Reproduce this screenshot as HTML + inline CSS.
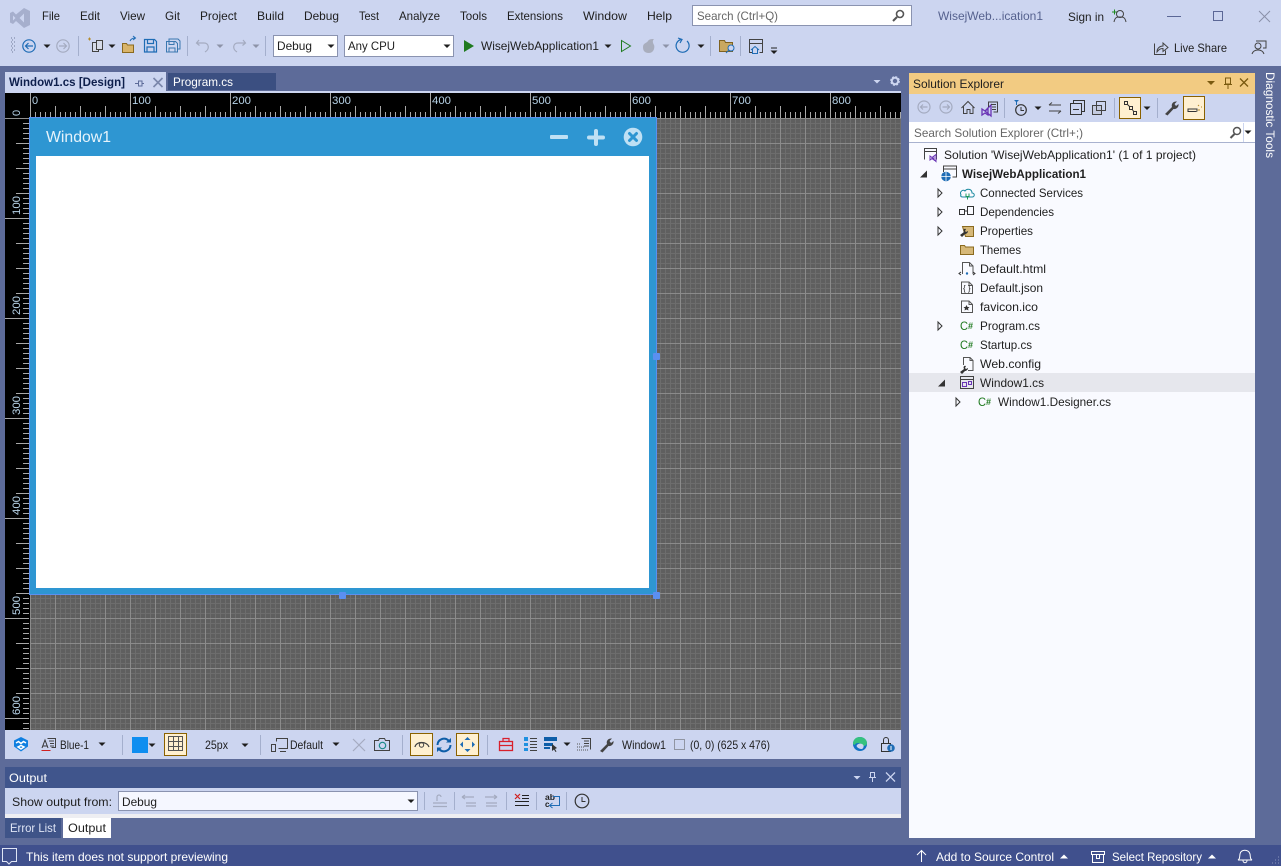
<!DOCTYPE html>
<html lang="en">
<head>
<meta charset="utf-8">
<title>Visual Studio</title>
<style>
html,body{margin:0;padding:0;background:#5d6b99;overflow:hidden}
svg{display:block}
text{font-family:"Liberation Sans",sans-serif;font-size:12px;fill:#1e1e1e}
.l{fill:#fff}
.g{fill:#666}
.r{fill:#b7d3e8;font-size:11px}
.c{shape-rendering:crispEdges}
.s{fill:none;stroke:#424242;stroke-width:1}
.b{fill:none;stroke:#1e6cb5;stroke-width:1.2}
.d{fill:none;stroke:#a4abc0;stroke-width:1.2}
</style>
</head>
<body>
<svg xmlns="http://www.w3.org/2000/svg" width="1281" height="866" viewBox="0 0 1281 866">
<defs>
<path id="cr" d="M-3.5-1.5h7L0 2z" fill="#1e1e1e"/>
<path id="crg" d="M-3.5-1.5h7L0 2z" fill="#8d93a8"/>
<pattern id="grid" patternUnits="userSpaceOnUse" x="30" y="118" width="25" height="25">
<rect width="25" height="25" fill="#5f5f5f"/>
<path d="M0 .5H25M0 5.5H25M0 10.5H25M0 15.5H25M0 20.5H25M.5 0V25M5.5 0V25M10.5 0V25M15.5 0V25M20.5 0V25" stroke="#6d6d6d" stroke-width="1"/>
<path d="M0 .5H25M.5 0V25" stroke="#8b8b8b" stroke-width="1"/>
</pattern>
<pattern id="hs" patternUnits="userSpaceOnUse" x="30" y="93" width="5" height="25"><rect x="0" y="19" width="1" height="6" fill="#a8a8a8"/></pattern>
<pattern id="hm" patternUnits="userSpaceOnUse" x="30" y="93" width="25" height="25"><rect x="0" y="13" width="1" height="12" fill="#a8a8a8"/></pattern>
<pattern id="hb" patternUnits="userSpaceOnUse" x="30" y="93" width="100" height="25"><rect x="0" y="0" width="1" height="25" fill="#a8a8a8"/></pattern>
<pattern id="vs" patternUnits="userSpaceOnUse" x="5" y="118" width="25" height="5"><rect x="18" y="0" width="6" height="1" fill="#a8a8a8"/></pattern>
<pattern id="vm" patternUnits="userSpaceOnUse" x="5" y="118" width="25" height="25"><rect x="11" y="0" width="13" height="1" fill="#a8a8a8"/></pattern>
<pattern id="vb" patternUnits="userSpaceOnUse" x="5" y="118" width="25" height="100"><rect x="0" y="0" width="24" height="1" fill="#a8a8a8"/></pattern>
</defs>

<rect width="1281" height="866" fill="#5d6b99"/>
<!-- top chrome -->
<rect class="c" width="1281" height="66" fill="#ccd5f0"/>
<path d="M24 8l6 3v14l-6 3-8-7-3 3-3-1.500V13l3-1.500 3 3zM24 13.500l-4.500 4.500 4.500 4.500zM13 15.500v5l2.500-2.500z" fill="#a6afcd" fill-rule="evenodd"/>
<text x="42" y="20" textLength="18" lengthAdjust="spacingAndGlyphs">File</text>
<text x="80" y="20" textLength="20" lengthAdjust="spacingAndGlyphs">Edit</text>
<text x="120" y="20" textLength="25" lengthAdjust="spacingAndGlyphs">View</text>
<text x="165" y="20" textLength="15" lengthAdjust="spacingAndGlyphs">Git</text>
<text x="200" y="20" textLength="37" lengthAdjust="spacingAndGlyphs">Project</text>
<text x="257" y="20" textLength="27" lengthAdjust="spacingAndGlyphs">Build</text>
<text x="304" y="20" textLength="35" lengthAdjust="spacingAndGlyphs">Debug</text>
<text x="359" y="20" textLength="20" lengthAdjust="spacingAndGlyphs">Test</text>
<text x="399" y="20" textLength="41" lengthAdjust="spacingAndGlyphs">Analyze</text>
<text x="460" y="20" textLength="27" lengthAdjust="spacingAndGlyphs">Tools</text>
<text x="507" y="20" textLength="56" lengthAdjust="spacingAndGlyphs">Extensions</text>
<text x="583" y="20" textLength="44" lengthAdjust="spacingAndGlyphs">Window</text>
<text x="647" y="20" textLength="25" lengthAdjust="spacingAndGlyphs">Help</text>
<rect class="c" x="692.500" y="5.500" width="219" height="20" fill="#fff" stroke="#8a93b0"/>
<text class="g" x="697" y="20" textLength="81" lengthAdjust="spacingAndGlyphs">Search (Ctrl+Q)</text>
<circle cx="900" cy="14" r="3.500" fill="none" stroke="#555" stroke-width="1.600"/><path d="M897 17l-4 4" stroke="#555" stroke-width="2"/>
<text x="938" y="20" textLength="105" lengthAdjust="spacingAndGlyphs" style="fill:#56628f">WisejWeb...ication1</text>
<text x="1068" y="21" textLength="36" lengthAdjust="spacingAndGlyphs">Sign in</text>
<path d="M1112 12h5M1114.500 9.500v5" stroke="#1f8a1f"/>
<circle cx="1120" cy="14" r="3.500" class="s"/><path d="M1114 22c1-5 3-5 6-5s5 0 6 5" class="s"/>
<path class="c" d="M1167 16.500h14" stroke="#5b6796"/>
<rect class="c" x="1213.500" y="11.500" width="9" height="9" fill="none" stroke="#5b6796"/>
<path d="M1259 11l11 11M1270 11l-11 11" stroke="#8a90a8"/>

<!-- main toolbar -->
<path d="M11 38h1M14 38h1M12 40h1M11 42h1M14 42h1M12 44h1M11 46h1M14 46h1M12 48h1M11 50h1M14 50h1M12 52h1" stroke="#707a9a" stroke-dasharray="1 1"/>
<circle cx="29" cy="46" r="6.200" class="b"/><path d="M33 46h-7M28.500 43l-3 3 3 3" class="b"/>
<use href="#cr" x="47" y="46"/>
<circle cx="63" cy="46" r="6.200" class="d"/><path d="M59 46h7M63.500 43l3 3-3 3" class="d"/>
<path class="c" d="M78.500 36v20M187.500 36v20M265.500 36v20M710.500 36v20M740.500 36v20" stroke="#a4afcd"/>
<path d="M88 39h3M89.500 37.500v3" stroke="#b58a2a"/>
<rect x="92.500" y="42.500" width="6" height="9" fill="#d6dbe9" stroke="#424242"/>
<rect x="96.500" y="40.500" width="6" height="9" fill="#d6dbe9" stroke="#424242"/>
<use href="#cr" x="112" y="46"/>
<path d="M122.500 52.500v-9h4l1 1.500h6v7.500z" fill="#d9b46a" stroke="#8a6a1f"/><path d="M130 41c1-2 3-3 5-3M133 36l2.500 2-2.500 2" fill="none" stroke="#1e6cb5"/>
<path d="M144.500 39.500h10l2 2v10.500h-12z M147.500 39.500v4h6v-4M147 52v-5h7v5" class="b"/>
<path d="M166.500 41.500h9l2 2v8.500h-11z M169 41.500v3h5v-3M169 52v-4h6v4M169 41v-2h9l2 2v8h-2" fill="none" stroke="#3a78b0"/>
<path d="M199 40l-2.500 3 3 2.500M197 43h7c5 0 6 6 1 9" class="d"/>
<use href="#crg" x="220" y="46"/>
<path d="M243 40l2.500 3-3 2.500M245 43h-7c-5 0-6 6-1 9" class="d"/>
<use href="#crg" x="256" y="46"/>
<rect class="c" x="273.500" y="35.500" width="64" height="21" fill="#fff" stroke="#8a93b0"/>
<text x="277" y="50" textLength="35" lengthAdjust="spacingAndGlyphs">Debug</text>
<use href="#cr" x="331" y="46"/>
<rect class="c" x="344.500" y="35.500" width="109" height="21" fill="#fff" stroke="#8a93b0"/>
<text x="348" y="50" textLength="47" lengthAdjust="spacingAndGlyphs">Any CPU</text>
<use href="#cr" x="447" y="46"/>
<path d="M464 40l10 6-10 6z" fill="#1f7a1f"/>
<text x="481" y="50" textLength="118" lengthAdjust="spacingAndGlyphs">WisejWebApplication1</text>
<use href="#cr" x="608" y="46"/>
<path d="M621.500 40.500l9 5.500-9 5.500z" fill="none" stroke="#1f7a1f"/>
<path d="M643 47c0-4 4-4 5-6s4-2 6-2c-2 2-1 4 0 6s0 8-5 8-6-3-6-6z" fill="#a9aebd"/>
<use href="#crg" x="666" y="46"/>
<path d="M681 39.500a6.500 6.500 0 1 0 6 1.500M678 38l4 1.500-2 3.500" fill="none" stroke="#1e6cb5" stroke-width="1.200"/>
<use href="#cr" x="701" y="46"/>
<path d="M719.500 51.500v-11h5l1 2h7v9z" fill="#c9a860" stroke="#7f6220"/><circle cx="731" cy="48" r="3" fill="#ccd5f0" stroke="#1e6cb5"/><path d="M729 50l-3 3" stroke="#1e6cb5"/>
<path d="M753 52.500h-3.500v-13h13v13h-3M749.500 43.500h13" class="s"/><path d="M751 50l4-3.500 4 3.500M752.500 49v4.500h5V49" fill="none" stroke="#1e6cb5"/>
<path d="M771 48h6" stroke="#222"/><use href="#cr" x="774" y="52"/>
<path d="M1154.500 43.500v11h11v-4" class="s"/><path d="M1157 52c0-4 3-6 6-6v-3l5 4.500-5 4v-3c-3 0-4 1-6 3.500z" class="s"/>
<text x="1174" y="52" textLength="53" lengthAdjust="spacingAndGlyphs">Live Share</text>
<circle cx="1258" cy="46" r="3" class="s"/><path d="M1252 54c1-3 3-4 6-4s5 1 6 4M1256 41h10v7h-3" class="s"/>

<!-- document tabs -->
<rect class="c" x="5" y="72" width="161" height="21" fill="#ccd5f0"/>
<text x="9" y="86" textLength="116" lengthAdjust="spacingAndGlyphs" style="font-weight:bold;fill:#0e1f4c">Window1.cs [Design]</text>
<path d="M135 83.500h3M138.500 81v5h3.500v-5zM142 83.500h2" stroke="#5d6b99" fill="none"/>
<path d="M153.500 78l9 9M162.500 78l-9 9" stroke="#7a86ab" stroke-width="1.600"/>
<rect class="c" x="168" y="73" width="108" height="17" fill="#3b4f81"/>
<text class="l" x="173" y="86" textLength="60" lengthAdjust="spacingAndGlyphs">Program.cs</text>
<path d="M873.500 80h7l-3.500 3.500z" fill="#ccd5f0"/>
<circle cx="895" cy="81" r="3.200" fill="none" stroke="#ccd5f0" stroke-width="2"/><circle cx="895" cy="81" r="4.300" fill="none" stroke="#ccd5f0" stroke-width="1.200" stroke-dasharray="2 1.400"/>

<!-- designer -->
<rect class="c" x="5" y="91" width="896" height="2" fill="#ccd5f0"/>
<rect class="c" x="5" y="93" width="896" height="25" fill="#000"/>
<rect class="c" x="5" y="118" width="25" height="612" fill="#000"/>
<rect class="c" x="30" y="118" width="871" height="612" fill="url(#grid)"/>
<g class="c">
<rect x="30" y="93" width="871" height="25" fill="url(#hs)"/>
<rect x="30" y="93" width="871" height="25" fill="url(#hm)"/>
<rect x="30" y="93" width="871" height="25" fill="url(#hb)"/>
<rect x="5" y="118" width="25" height="612" fill="url(#vs)"/>
<rect x="5" y="118" width="25" height="612" fill="url(#vm)"/>
<rect x="5" y="118" width="25" height="612" fill="url(#vb)"/>
<rect x="5" y="118" width="25" height="1" fill="#8f8f8f"/>
</g>
<text class="r" x="32" y="104">0</text>
<text class="r" x="132" y="104" textLength="19" lengthAdjust="spacingAndGlyphs">100</text>
<text class="r" x="232" y="104" textLength="19" lengthAdjust="spacingAndGlyphs">200</text>
<text class="r" x="332" y="104" textLength="19" lengthAdjust="spacingAndGlyphs">300</text>
<text class="r" x="432" y="104" textLength="19" lengthAdjust="spacingAndGlyphs">400</text>
<text class="r" x="532" y="104" textLength="19" lengthAdjust="spacingAndGlyphs">500</text>
<text class="r" x="632" y="104" textLength="19" lengthAdjust="spacingAndGlyphs">600</text>
<text class="r" x="732" y="104" textLength="19" lengthAdjust="spacingAndGlyphs">700</text>
<text class="r" x="832" y="104" textLength="19" lengthAdjust="spacingAndGlyphs">800</text>
<text class="r" transform="translate(20,116) rotate(-90)">0</text>
<text class="r" transform="translate(20,215) rotate(-90)" textLength="19" lengthAdjust="spacingAndGlyphs">100</text>
<text class="r" transform="translate(20,315) rotate(-90)" textLength="19" lengthAdjust="spacingAndGlyphs">200</text>
<text class="r" transform="translate(20,415) rotate(-90)" textLength="19" lengthAdjust="spacingAndGlyphs">300</text>
<text class="r" transform="translate(20,515) rotate(-90)" textLength="19" lengthAdjust="spacingAndGlyphs">400</text>
<text class="r" transform="translate(20,615) rotate(-90)" textLength="19" lengthAdjust="spacingAndGlyphs">500</text>
<text class="r" transform="translate(20,715) rotate(-90)" textLength="19" lengthAdjust="spacingAndGlyphs">600</text>

<!-- window -->
<rect class="c" x="29.500" y="117.500" width="627" height="477" fill="#2e96d2" stroke="#5b8ff0"/>
<rect class="c" x="36" y="156" width="613" height="432" fill="#fff"/>
<text x="46" y="142" textLength="65" lengthAdjust="spacingAndGlyphs" style="font-size:16px;fill:#e6f3fb">Window1</text>
<rect x="550" y="135" width="18" height="4" rx="1" fill="#bfe0f4"/>
<path d="M589 137.500h14M596 131v13" stroke="#bfe0f4" stroke-width="4" stroke-linecap="round"/>
<circle cx="633" cy="137" r="9.300" fill="#bfe0f4"/>
<path d="M629.500 133.500l7 7M636.500 133.500l-7 7" stroke="#2e96d2" stroke-width="3" stroke-linecap="round"/>
<rect x="339" y="592" width="7" height="7" rx="1" fill="#5b8ff0"/>
<rect x="653" y="353" width="7" height="7" rx="1" fill="#5b8ff0"/>
<rect x="653" y="592" width="7" height="7" rx="1" fill="#5b8ff0"/>

<!-- designer toolbar -->
<rect class="c" x="5" y="730" width="896" height="29" fill="#ccd5f0"/>
<path d="M21 737l7 3.500v6l-7 5-7-5v-6z" fill="#0f7fe0"/><path d="M16 743l2.500-1.500 2.500 2 2.500-2L26 743M21 749l-3-2 3-1.500 3 1.500z" stroke="#fff" stroke-width="1.500" fill="none"/>
<path d="M42 748l3-8 3 8M43 746h4" fill="none" stroke="#333"/><path d="M41.500 750.500h9" stroke="#d02020"/>
<path d="M47.500 738.500h8v9h-4M49 741h5M50 743.500h4M50 746h4" class="s"/>
<text x="60" y="749" textLength="29" lengthAdjust="spacingAndGlyphs">Blue-1</text>
<use href="#cr" x="102" y="744"/>
<path class="c" d="M122.500 735v20M260.500 735v20M402.500 735v20M487.500 735v20" stroke="#a4afcd"/>
<rect class="c" x="132" y="737" width="16" height="16" fill="#0f8ef0"/>
<use href="#cr" x="152" y="745"/>
<rect class="c" x="164.500" y="733.500" width="22" height="22" fill="#fff0d0" stroke="#8a6100"/>
<path class="c" d="M168.500 736.500h14v14h-14zM173.500 736.500v14M178.500 736.500v14M168.500 741.500h14M168.500 746.500h14" fill="none" stroke="#555"/>
<text x="205" y="749" textLength="23" lengthAdjust="spacingAndGlyphs">25px</text>
<use href="#cr" x="245" y="745"/>
<path d="M276.500 741.500v-3h11v10h-9M280 751.500h6" class="s"/><rect x="271.500" y="744.500" width="4" height="7" fill="none" stroke="#424242"/>
<text x="290" y="749" textLength="33" lengthAdjust="spacingAndGlyphs">Default</text>
<use href="#cr" x="336" y="744"/>
<path d="M353 739l12 12M365 739l-12 12" stroke="#a4abc0" stroke-width="1.200"/>
<path d="M374.500 740.500h4l1-2h5l1 2h4v10h-15z" fill="none" stroke="#424242"/><circle cx="382.500" cy="745.500" r="3.200" fill="none" stroke="#1b8a8a" stroke-width="1.200"/>
<rect class="c" x="410.500" y="733.500" width="22" height="22" fill="#fff0d0" stroke="#8a6100"/>
<path d="M415 747c1-6 12-6 14 0" fill="none" stroke="#424242" stroke-width="1.200"/><circle cx="421.500" cy="745" r="2.200" fill="none" stroke="#424242"/>
<path d="M437.500 745a6.500 6.500 0 0 1 11-4.500M450.500 745a6.500 6.500 0 0 1-11 4.500" fill="none" stroke="#0e5ea8" stroke-width="2"/><path d="M446 742.500h5v-4.500zM442 747.500h-5v4.500z" fill="#0e5ea8"/>
<rect class="c" x="456.500" y="733.500" width="22" height="22" fill="#fff0d0" stroke="#8a6100"/>
<path d="M467.500 737l3 3h-6zM467.500 752l3-3h-6zM460 744.500l3-3v6zM475 744.500l-3-3v6z" fill="#1e6cb5"/>
<rect x="499.500" y="741.500" width="13" height="9" fill="none" stroke="#d8202c" stroke-width="1.300"/><path d="M503 741v-2.500h6v2.500M499.500 745.500h13" fill="none" stroke="#d8202c" stroke-width="1.200"/>
<path class="c" d="M524 737h4v4h-4zM524 743h4v3h-4zM524 748h4v3h-4z" fill="#1e90e0"/>
<path class="c" d="M530 738.500h7M530 741.500h7M530 744.500h7M530 747.500h7M530 750.500h7" stroke="#424242"/>
<rect class="c" x="544" y="737" width="13" height="4" fill="#0e5ea8"/><rect class="c" x="544" y="743" width="9" height="3" fill="#0e5ea8"/><path class="c" d="M544 748h6" stroke="#0e5ea8" stroke-width="2"/><path d="M552 744l5 4-2 1 1.500 2.500-1 .5-1.500-2.500-2 1.500z" fill="#333"/>
<use href="#cr" x="567" y="744"/>
<path d="M581.500 738.500h9v11M584 741h5M584 743.500h5M584 746h5" class="s"/><path d="M577 744h4M577 747h7M577 750h11" stroke="#555" stroke-dasharray="1 1"/>
<path d="M600 751l7-7c-1-3 1-6 5-5.500l-2.500 2.500 1.500 2 2.500-2c.5 3-2 5.500-5 5l-6 6.500z" fill="#444"/>
<text x="622" y="749" textLength="44" lengthAdjust="spacingAndGlyphs">Window1</text>
<rect class="c" x="674.500" y="739.500" width="10" height="10" fill="none" stroke="#555" stroke-dasharray="1 1"/>
<text x="690" y="749" textLength="80" lengthAdjust="spacingAndGlyphs">(0, 0) (625 x 476)</text>
<circle cx="860" cy="744" r="7" fill="#1272c4"/><path d="M853 744c0-5 3.500-7 7-7 4 0 7 3 7 6 0 2-2 3-3.500 3-1 0-2-.5-2.500-1.500-1-2-5-2-6 0-.5 1-2-.5-2-.5z" fill="#35c27f"/><path d="M856.500 746c1-3 6-3 7-.5.5 1.500-.5 3-1.500 3.500-2.500 0-4.500-1-5.500-3z" fill="#ccd5f0"/>
<rect x="881.500" y="743.500" width="9" height="8" fill="none" stroke="#333"/><path d="M883.500 743v-3a2.500 2.500 0 0 1 5 0v3" fill="none" stroke="#333"/>
<circle cx="891" cy="748" r="3.800" fill="#1e6cb5"/><path d="M891 746v4" stroke="#fff"/>

<!-- output -->
<rect class="c" x="5" y="767" width="896" height="21" fill="#40558c"/>
<text class="l" x="9" y="782" textLength="38" lengthAdjust="spacingAndGlyphs">Output</text>
<path d="M853.500 776h7l-3.500 3.500z" fill="#ccd5f0"/>
<path d="M870.500 772.500h4v5h-4zM869 777.500h7M872.500 778v4" fill="none" stroke="#ccd5f0"/>
<path d="M886 772.500l9 9M895 772.500l-9 9" stroke="#ccd5f0" stroke-width="1.300"/>
<rect class="c" x="5" y="788" width="896" height="26" fill="#ccd5f0"/>
<rect class="c" x="5" y="814" width="896" height="4" fill="#eeeef2"/>
<text x="12" y="806" textLength="100" lengthAdjust="spacingAndGlyphs">Show output from:</text>
<rect class="c" x="118.500" y="791.500" width="299" height="19" fill="#f5f7ff" stroke="#8a93b0"/>
<text x="122" y="806" textLength="35" lengthAdjust="spacingAndGlyphs">Debug</text>
<use href="#cr" x="411" y="801"/>
<path class="c" d="M424.500 792v18M454.500 792v18M506.500 792v18M536.500 792v18M566.500 792v18" stroke="#a4afcd"/>
<path d="M433 803h14M433 806.500h14M437 801v-4a2 2 0 0 1 4 0" class="d"/>
<path d="M462 797h12M462 797l3-2M462 797l3 2M466 803h10M466 806h10" class="d"/>
<path d="M497 797h-12M497 797l-3-2M497 797l-3 2M486 803h11M486 806h11" class="d"/>
<path d="M515 794l5 5M520 794l-5 5" stroke="#d02020" stroke-width="1.200"/>
<path class="c" d="M522 795.500h7M522 798.500h7M515 801.500h14M515 805.500h14" stroke="#222"/>
<text x="545" y="800" style="font-size:8px;font-weight:bold" textLength="10" lengthAdjust="spacingAndGlyphs">ab</text>
<text x="545" y="807" style="font-size:8px;font-weight:bold">c</text>
<path d="M553 796.500h6.500v9H550M552.500 803l-3 2.500 3 2.500" fill="none" stroke="#1e6cb5"/>
<circle cx="582" cy="801" r="6.800" fill="none" stroke="#333" stroke-width="1.200"/><path d="M582 797v4.500h3.500" fill="none" stroke="#333"/>
<rect class="c" x="5" y="818" width="56" height="20" fill="#3f5488"/>
<text x="10" y="832" textLength="46" lengthAdjust="spacingAndGlyphs" style="fill:#dfe5f5">Error List</text>
<rect class="c" x="63" y="818" width="48" height="20" fill="#fff"/>
<text x="68" y="832" textLength="38" lengthAdjust="spacingAndGlyphs">Output</text>

<!-- solution explorer -->
<rect class="c" x="909" y="73" width="346" height="21" fill="#f2cb82"/>
<text x="913" y="88" textLength="91" lengthAdjust="spacingAndGlyphs">Solution Explorer</text>
<path d="M1207 81h8l-4 4z" fill="#7a5a10"/>
<path d="M1225.500 78h5v6h-5zM1224 84.500h8M1228 85v4" fill="none" stroke="#7a5a10"/>
<path d="M1240 78.500l8 8M1248 78.500l-8 8" stroke="#7a5a10" stroke-width="1.300"/>
<rect class="c" x="909" y="94" width="346" height="28" fill="#ccd5f0"/>
<circle cx="924" cy="107" r="6" class="d"/><path d="M927.500 107h-7M923 104.500l-2.500 2.500 2.500 2.500" class="d"/>
<circle cx="946" cy="107" r="6" class="d"/><path d="M942.500 107h7M947 104.500l2.500 2.500-2.500 2.500" class="d"/>
<path d="M961.500 108l6.500-6.500 6.500 6.500M963.500 106.500v7h3.500v-4h3v4h3v-7" class="s"/>
<path d="M982 109l3 2 3-2v6l-3-2-3 2zM985 111l6-6v11z" fill="none" stroke="#6a35b5" stroke-width="1.300"/>
<path d="M988.500 107v-5h9v10h-4M991 104.500h5M992 107h4M992 109.500h4" class="s"/>
<path class="c" d="M1004.500 98v20M1114.500 98v20M1157.500 98v20" stroke="#a4afcd"/>
<path d="M1014 100h5l-2.500 2.500z" fill="#1e6cb5"/><path d="M1016.500 102v3" stroke="#1e6cb5"/>
<circle cx="1021" cy="110" r="5.300" fill="none" stroke="#333" stroke-width="1.200"/><path d="M1021 107v3.500h3" fill="none" stroke="#333"/>
<use href="#cr" x="1038" y="108"/>
<path d="M1049 105h12M1049 105l3-2.500M1049 111h12M1061 111l-3 2.500" fill="none" stroke="#444"/>
<rect class="c" x="1070.500" y="103.500" width="11" height="11" fill="none" stroke="#333"/><path class="c" d="M1073.500 103.500v-3h11v11h-3M1073 109.500h6" fill="none" stroke="#333"/>
<rect class="c" x="1092.500" y="105.500" width="9" height="9" fill="#c4cbe0" stroke="#424242"/><rect class="c" x="1096.500" y="101.500" width="9" height="9" fill="none" stroke="#424242"/>
<rect class="c" x="1119.500" y="97.500" width="21" height="21" fill="#fff0d0" stroke="#8a6100"/>
<path d="M1124.500 101.500h3v3h-3zM1129.500 106.500h3v3h-3zM1133.500 111.500h3v3h-3zM1127 104l3 3M1132 109l2 3" fill="none" stroke="#333"/>
<use href="#cr" x="1147" y="108"/>
<path d="M1165 114l7-7c-1-3 1-6 5-5.500l-2.500 2.500 1.500 2 2.500-2c.5 3-2 5.500-5 5l-6 6.500z" fill="#444"/>
<rect class="c" x="1183.500" y="96.500" width="21" height="23" fill="#fff0d0" stroke="#8a6100"/>
<path d="M1187.500 111.500h9M1188 111v-2h9v2.500" fill="none" stroke="#333"/><path d="M1198 105l1 1M1201 107l1 0M1198 110h2" stroke="#b58a2a"/>
<rect class="c" x="909" y="122" width="346" height="21" fill="#fff"/>
<path class="c" d="M909 142.500h346" stroke="#a9b2cf"/>
<text class="g" x="914" y="137" textLength="169" lengthAdjust="spacingAndGlyphs">Search Solution Explorer (Ctrl+;)</text>
<circle cx="1237" cy="131" r="3.500" fill="none" stroke="#555" stroke-width="1.500"/><path d="M1234.500 134l-4 4" stroke="#555" stroke-width="2"/>
<path class="c" d="M1243.500 123v19" stroke="#ccd5f0"/><use href="#cr" x="1248" y="132"/>
<rect class="c" x="909" y="143" width="346" height="695" fill="#f9faff"/>
<rect class="c" x="909" y="373" width="346" height="19" fill="#e6e7ed"/>

<!-- tree icons -->
<path d="M924.500 159.500v-11h12v11M924.500 151.500h12" class="s" stroke-width="1"/><path d="M930 156l2 1.500 2-1.500v4l-2-1.500-2 1.500zM932 157.500l4-3v7z" fill="none" stroke="#6a35b5"/>
<path d="M927 177.500v-7l-7 7z" fill="#333"/>
<path d="M943.500 172v-6h13v11h-4M943.500 169h13" class="s"/>
<circle cx="946" cy="176.500" r="4.800" fill="#1e6cb5"/><path d="M941 176.500h10M946 172v9" stroke="#fff" stroke-width=".8"/>
<g fill="none" stroke="#333">
<path d="M938 189l4 4-4 4z"/><path d="M938 208l4 4-4 4z"/><path d="M938 227l4 4-4 4z"/><path d="M938 322l4 4-4 4z"/><path d="M956 398l4 4-4 4z"/>
</g>
<path d="M945 386.500v-7l-7 7z" fill="#333"/>
<path d="M961 195c-2-4 3-6 4-4 2-3 7-2 7 2 3 0 3 4 0 4h-9c-2 0-3-1-2-2z" fill="none" stroke="#1b8aa0"/><path d="M966 193.500v3h3v-3M967.500 196.500v3" fill="none" stroke="#1d9c5c"/>
<rect class="c" x="959.500" y="209.500" width="5" height="5" fill="none" stroke="#333"/><rect class="c" x="967.500" y="206.500" width="6" height="8" fill="none" stroke="#333"/><path class="c" d="M964 211h4" stroke="#333"/>
<path d="M962.500 226.500h11v10h-8z" fill="#d6b878" stroke="#8a6a1f"/><path d="M960 235l4-3c-1-2 0-4 2-3l-1 2 1 1 2-1c0 2-2 3-3 3l-3 3z" fill="#333"/>
<path d="M960.500 254.500v-9h4l1 1.500h8v7.500z" fill="#d6b878" stroke="#8a6a1f"/>
<path d="M962.500 274v-11.500h7l3.500 3.500v8M969.500 262.500V266h3.500" fill="none" stroke="#555"/><path d="M961 275l-2-1.500 2-1.500M973 272l2 1.500-2 1.500" fill="none" stroke="#333"/><circle cx="967" cy="273.500" r="1.200" fill="#1e6cb5"/>
<path d="M961.500 293.500v-11.500h7.500l3.500 3.500v8zM969 282v3.500h3.500" fill="none" stroke="#555"/><text x="963" y="291" style="font-size:8px">{ }</text>
<path d="M961.500 312.500v-11.500h7.500l3.500 3.500v8zM969 301v3.500h3.500" fill="none" stroke="#555"/><path d="M966.500 305l1 2h2l-1.500 1.500.5 2-2-1-2 1 .5-2L963.500 307h2z" fill="#333"/>
<text x="960" y="330" textLength="8" lengthAdjust="spacingAndGlyphs" style="fill:#1f7a1f">C</text><text x="968" y="329" style="fill:#1f7a1f;font-size:9px;font-weight:bold">#</text>
<text x="960" y="349" textLength="8" lengthAdjust="spacingAndGlyphs" style="fill:#1f7a1f">C</text><text x="968" y="348" style="fill:#1f7a1f;font-size:9px;font-weight:bold">#</text>
<text x="978" y="406" textLength="8" lengthAdjust="spacingAndGlyphs" style="fill:#1f7a1f">C</text><text x="986" y="405" style="fill:#1f7a1f;font-size:9px;font-weight:bold">#</text>
<path d="M963.500 365v-7.500h6.500l3 3v10h-5M970 357.500v3h3" fill="none" stroke="#555"/><path d="M960 372l4-3c-1-2 0-4 2-3l-1 2 1 1 2-1c0 2-2 3-3 3l-3 3z" fill="#333"/>
<rect class="c" x="960.500" y="376.500" width="13" height="12" fill="none" stroke="#424242"/><path class="c" d="M960.500 379.500h13" stroke="#424242"/><rect class="c" x="962.500" y="382.500" width="4" height="4" fill="none" stroke="#6a35b5"/><rect class="c" x="968.500" y="381.500" width="3" height="3" fill="none" stroke="#6a35b5"/>

<!-- tree text -->
<text x="944" y="159" textLength="252" lengthAdjust="spacingAndGlyphs">Solution 'WisejWebApplication1' (1 of 1 project)</text>
<text x="962" y="178" textLength="124" lengthAdjust="spacingAndGlyphs" style="font-weight:bold">WisejWebApplication1</text>
<text x="980" y="197" textLength="103" lengthAdjust="spacingAndGlyphs">Connected Services</text>
<text x="980" y="216" textLength="74" lengthAdjust="spacingAndGlyphs">Dependencies</text>
<text x="980" y="235" textLength="53" lengthAdjust="spacingAndGlyphs">Properties</text>
<text x="980" y="254" textLength="41" lengthAdjust="spacingAndGlyphs">Themes</text>
<text x="980" y="273" textLength="66" lengthAdjust="spacingAndGlyphs">Default.html</text>
<text x="980" y="292" textLength="63" lengthAdjust="spacingAndGlyphs">Default.json</text>
<text x="980" y="311" textLength="58" lengthAdjust="spacingAndGlyphs">favicon.ico</text>
<text x="980" y="330" textLength="60" lengthAdjust="spacingAndGlyphs">Program.cs</text>
<text x="980" y="349" textLength="52" lengthAdjust="spacingAndGlyphs">Startup.cs</text>
<text x="980" y="368" textLength="61" lengthAdjust="spacingAndGlyphs">Web.config</text>
<text x="980" y="387" textLength="64" lengthAdjust="spacingAndGlyphs">Window1.cs</text>
<text x="998" y="406" textLength="113" lengthAdjust="spacingAndGlyphs">Window1.Designer.cs</text>

<!-- diagnostic tools -->
<text class="l" transform="translate(1266,72) rotate(90)" textLength="86" lengthAdjust="spacingAndGlyphs">Diagnostic Tools</text>

<!-- status bar -->
<rect class="c" x="0" y="845" width="1281" height="21" fill="#40508d"/>
<path d="M2.500 848.500h14v13h-5l-2.500 2.500-2.500-2.500h-4z" fill="none" stroke="#dfe5f5"/>
<text class="l" x="26" y="861" textLength="202" lengthAdjust="spacingAndGlyphs">This item does not support previewing</text>
<path d="M921.500 862v-11M917 855l4.500-4.500L926 855" fill="none" stroke="#fff"/>
<text class="l" x="936" y="861" textLength="118" lengthAdjust="spacingAndGlyphs">Add to Source Control</text>
<path d="M1060 858.500h8l-4-4z" fill="#fff"/>
<path d="M1091.500 851.500h13v3h-13zM1092.500 854.500v8h11v-8M1096.500 855v3.500h3V855" fill="none" stroke="#fff"/>
<text class="l" x="1112" y="861" textLength="90" lengthAdjust="spacingAndGlyphs">Select Repository</text>
<path d="M1208 858.500h8l-4-4z" fill="#fff"/>
<path d="M1238 860c2-1 1.500-3 2-6 .5-5 9-5 10 0 .5 3 0 5 2 6zM1243 860.500c0 3 4 3 4 0" fill="none" stroke="#fff"/>
<path d="M1278 863h1M1275 863h1M1272 863h1M1278 860h1M1275 860h1M1278 857h1" stroke="#8a95bd"/>
</svg>
</body>
</html>
